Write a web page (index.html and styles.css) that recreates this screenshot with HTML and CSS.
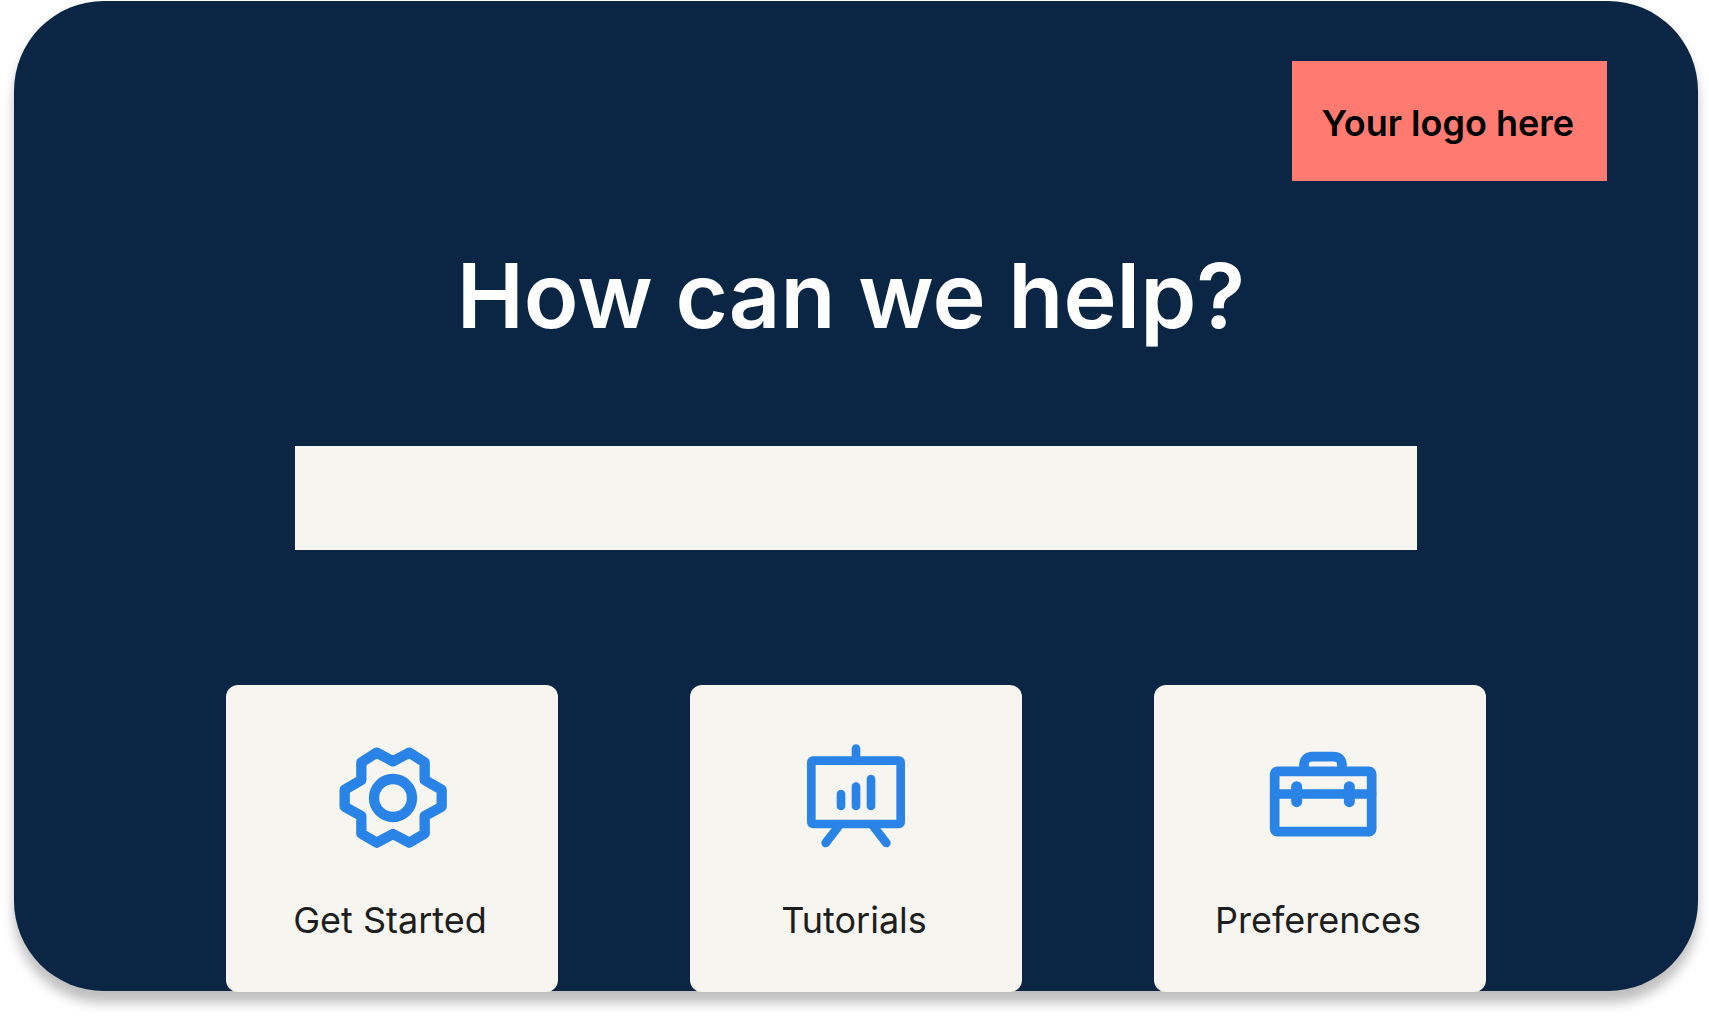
FILE: index.html
```html
<!DOCTYPE html>
<html lang="en">
<head>
  <meta charset="utf-8">
  <meta name="viewport" content="width=device-width, initial-scale=1">
  <title>Help Center</title>
  <link rel="stylesheet" href="styles.css">
</head>
<body>
  <main class="panel">
    <header class="top">
      <div class="logo">Your logo here</div>
    </header>
    <h1 class="title">How can we help?</h1>
    <form class="search" role="search">
      <input class="search-box" type="search" aria-label="Search help">
    </form>
    <nav class="cards" aria-label="Help topics">
      <a class="card" href="#get-started">
        <svg class="icon" viewBox="36 24 360 360" stroke-width="31" aria-hidden="true">
          <path d="M219 94 L268 68 L314 97 V150 L365 179 V230 L314 258 V311 L268 338 L219 312 L170 338 L124 311 V258 L74 230 V179 L124 150 V97 L170 68 Z"/>
          <circle cx="219" cy="204" r="57"/>
        </svg>
        <span class="label">Get Started</span>
      </a>
      <a class="card" href="#tutorials">
        <svg class="icon" viewBox="15 24 360 360" stroke-width="26" aria-hidden="true">
          <rect x="61" y="92" width="268" height="190" rx="5"/>
          <path d="M195 92 V56 M150 192 V228 M195 170 V228 M240 147 V228 M142 290 L104 339 M248 290 L286 339"/>
        </svg>
        <span class="label">Tutorials</span>
      </a>
      <a class="card" href="#preferences">
        <svg class="icon" viewBox="30 24 360 360" stroke-width="29" aria-hidden="true">
          <rect x="74" y="124" width="291" height="181" rx="8"/>
          <path d="M74 192 H365 M162 120 V106 Q162 80 188 80 H250 Q276 80 276 106 V120"/>
          <path stroke-width="33" d="M140 170 V215 M298 170 V215"/>
        </svg>
        <span class="label">Preferences</span>
      </a>
    </nav>
  </main>
</body>
</html>
```
FILE: styles.css
```css
* {
  box-sizing: border-box;
}

body {
  margin: 0;
  padding: 1px 11px 25px 14px;
  background: #fff;
  font-family: Inter, "Liberation Sans", sans-serif;
}

.panel {
  display: flex;
  flex-direction: column;
  align-items: center;
  padding-top: 60px;
  border-radius: 90px;
  background: #0b2644;
  box-shadow: 0 12px 12px rgba(0, 0, 0, 0.25);
}

.top {
  display: flex;
  justify-content: flex-end;
  width: 100%;
  padding-right: 91px;
}

.logo {
  padding: 40px 33px 36px 30px;
  background: #ff7a70;
  color: #000;
  font-size: 36px;
  font-weight: 600;
  line-height: 44px;
}

.title {
  margin: 60px 0 96px;
  padding-right: 10px;
  color: #fff;
  font-size: 90px;
  font-weight: 600;
  line-height: 109px;
  text-align: center;
}

.search {
  width: 90%;
  max-width: 1122px;
  margin-bottom: 135px;
}

.search-box {
  display: block;
  width: 100%;
  height: 104px;
  padding: 0 32px;
  border: 0;
  border-radius: 0;
  background: #f6f5f0;
  color: #1e1e1e;
  font: inherit;
  font-size: 36px;
  appearance: none;
}

.cards {
  display: grid;
  grid-template-columns: repeat(3, minmax(0, 332px));
  justify-content: space-between;
  width: 90%;
  max-width: 1260px;
  margin-bottom: -1px;
}

.card {
  display: flex;
  flex-direction: column;
  align-items: center;
  gap: 40px;
  padding: 53px 0 50px;
  border-radius: 12px;
  background: #f6f5f0;
  color: #1e1e1e;
  text-decoration: none;
}

.icon {
  width: 120px;
  height: 120px;
  fill: none;
  stroke: #2a83e6;
  stroke-linecap: round;
  stroke-linejoin: round;
}

.label {
  padding-right: 4px;
  font-size: 36px;
  line-height: 44px;
}
```
